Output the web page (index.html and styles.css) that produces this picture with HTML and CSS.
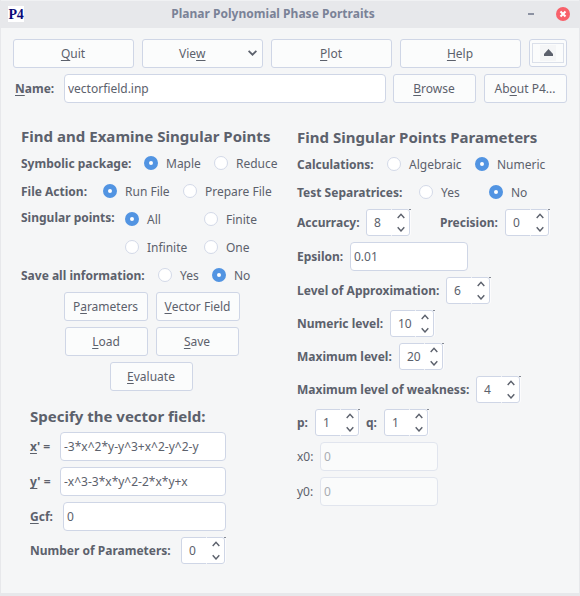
FILE: index.html
```html
<!DOCTYPE html>
<html lang="en">
<head>
<meta charset="utf-8">
<title>Planar Polynomial Phase Portraits</title>
<link rel="stylesheet" href="styles.css">
</head>
<body>
<svg class="defs" width="0" height="0" aria-hidden="true">
  <symbol id="arrows" viewBox="0 0 8 19"><path d="M.7 5 4 1.2 7.3 5M.7 14.2 4 18l3.3-3.8" fill="none" stroke="#5c616c" stroke-width="1.4"/></symbol>
</svg>
<div class="window">
  <header class="titlebar">
    <span class="logo">P4</span>
    <h1>Planar Polynomial Phase Portraits</h1>
    <span class="minimize"></span>
    <span class="close"><svg width="14" height="14" viewBox="0 0 14 14"><circle cx="7" cy="7" r="7" fill="#f8616b"/><path d="m4.5 4.5 5 5m0-5-5 5" stroke="#fff" stroke-width="2.1"/></svg></span>
  </header>

  <nav class="toolbar">
    <button><u>Q</u>uit</button>
    <button class="menu">Vie<u>w</u><svg width="9" height="6" viewBox="0 0 9 6"><path d="M.6.8 4.5 4.7 8.4.8" fill="none" stroke="#5c616c" stroke-width="1.8"/></svg></button>
    <button><u>P</u>lot</button>
    <button><u>H</u>elp</button>
    <button class="collapse"><span><i><svg width="9" height="7" viewBox="0 0 9 7"><path d="M4.5 0 9 5v2H0V5z" fill="#5c616c"/></svg></i></span></button>
  </nav>
  <div class="file">
    <b class="name"><u>N</u>ame:</b>
    <input value="vectorfield.inp">
    <button><u>B</u>rowse</button>
    <button>Ab<u>o</u>ut P4...</button>
  </div>

  <main>
    <section class="left">
      <h2 class="find">Find and Examine Singular Points</h2>
      <div class="options symbolic"><b>Symbolic package:</b><label><i class="radio on"></i>Maple</label><label><i class="radio"></i>Reduce</label></div>
      <div class="options action"><b>File Action:</b><label><i class="radio on"></i>Run File</label><label><i class="radio"></i>Prepare File</label></div>
      <div class="options points"><b>Singular points:</b><label><i class="radio on"></i>All</label><label><i class="radio"></i>Finite</label><label class="infinite"><i class="radio"></i>Infinite</label><label><i class="radio"></i>One</label></div>
      <div class="options save"><b>Save all information:</b><label><i class="radio"></i>Yes</label><label><i class="radio on"></i>No</label></div>
      <div class="actions">
        <div><button class="wide">P<u>a</u>rameters</button><button class="wide"><u>V</u>ector Field</button></div>
        <div><button><u>L</u>oad</button><button><u>S</u>ave</button></div>
        <div><button class="evaluate"><u>E</u>valuate</button></div>
      </div>
      <div class="equations">
        <h2 class="specify">Specify the vector field:</h2>
        <div class="row eq"><b><u>x</u>' =</b><input value="-3*x^2*y-y^3+x^2-y^2-y"></div>
        <div class="row eq"><b><u>y</u>' =</b><input value="-x^3-3*x*y^2-2*x*y+x"></div>
        <div class="row gcf"><b><u>G</u>cf:</b><input value="0"></div>
        <div class="row count"><b>Number of Parameters:</b><span class="spin"><span>0</span><svg><use href="#arrows"/></svg></span></div>
      </div>
    </section>

    <section class="right">
      <h2 class="params">Find Singular Points Parameters</h2>
      <div class="options calc"><b>Calculations:</b><label><i class="radio"></i>Algebraic</label><label><i class="radio on"></i>Numeric</label></div>
      <div class="options test"><b>Test Separatrices:</b><label><i class="radio"></i>Yes</label><label><i class="radio on"></i>No</label></div>
      <div class="fields">
        <div class="row accuracy"><b>Accurracy:</b><span class="spin"><span>8</span><svg><use href="#arrows"/></svg></span><b>Precision:</b><span class="spin"><span>0</span><svg><use href="#arrows"/></svg></span></div>
        <div class="row epsilon"><b>Epsilon:</b><input value="0.01"></div>
        <div class="row approx"><b>Level of Approximation:</b><span class="spin"><span>6</span><svg><use href="#arrows"/></svg></span></div>
        <div class="row numeric"><b>Numeric level:</b><span class="spin"><span>10</span><svg><use href="#arrows"/></svg></span></div>
        <div class="row maximum"><b>Maximum level:</b><span class="spin"><span>20</span><svg><use href="#arrows"/></svg></span></div>
        <div class="row weakness"><b>Maximum level of weakness:</b><span class="spin"><span>4</span><svg><use href="#arrows"/></svg></span></div>
        <div class="row pq"><b>p:</b><span class="spin"><span>1</span><svg><use href="#arrows"/></svg></span><b>q:</b><span class="spin"><span>1</span><svg><use href="#arrows"/></svg></span></div>
        <div class="row origin"><span>x0:</span><input value="0" disabled></div>
        <div class="row origin"><span>y0:</span><input value="0" disabled></div>
      </div>
    </section>
  </main>
</div>
</body>
</html>
```

FILE: styles.css
```css
* { box-sizing: border-box; }
body {
  margin: 0;
  background: #e7e8eb;
  color: #5c616c;
  font: 12px/16px "Noto Sans", sans-serif;
}
.defs { display: block; }
.window {
  width: 580px;
  height: 596px;
  border: solid #e7e8eb;
  border-width: 0 1px 3px;
  background: #f5f6f7;
  overflow: hidden;
}
h1, h2 { margin: 0; white-space: nowrap; }
b { white-space: nowrap; }
u { text-decoration: underline; text-underline-offset: 2px; text-decoration-thickness: 1px; text-decoration-skip-ink: none; }

.titlebar {
  display: flex;
  align-items: center;
  height: 28px;
  padding: 0 10px 0 8px;
  margin: 0 -1px;
  border-top: 1px solid #f0f1f3;
  background: #e7e8eb;
}
.logo {
  width: 16px;
  height: 16px;
  margin-top: -1px;
  background: #fff;
  color: #0a0a78;
  font: bold 14px/17px "Liberation Serif", serif;
  letter-spacing: -.3px;
  text-align: center;
}
h1 { flex: 1; padding-right: 6px; color: #7a8297; font-size: 12px; line-height: 16px; letter-spacing: .02px; text-align: center; }
.titlebar h1 { margin-top: -1px; }
.minimize { width: 6px; height: 2px; margin: -1px 22px 0 0; background: #8c92a2; }
.close { display: flex; margin-top: -1px; }

button {
  display: flex;
  align-items: center;
  justify-content: center;
  width: 83px;
  height: 29px;
  padding: 1px 1px 0 0;
  border: 1px solid #cfd6e6;
  border-radius: 3px;
  background: #fbfcfc;
  color: inherit;
  font: inherit;
  white-space: nowrap;
}
input {
  width: 118px;
  height: 29px;
  padding: 0 3px 1px;
  border: 1px solid #cfd6e6;
  border-radius: 4px;
  background: #fff;
  color: inherit;
  font: inherit;
}
input:disabled { border-color: #e1e5ee; background: #fafbfb; color: #a9acb2; }

.toolbar { display: flex; gap: 8px; padding: 11px 12px 0; }
.toolbar button { width: 121px; }
.toolbar .menu { justify-content: flex-start; padding-left: 36px; }
.menu svg { margin: -2px 0 0 42px; }
.toolbar .collapse { width: 38px; height: 28px; padding: 0; }
.collapse span { display: flex; justify-content: center; align-items: center; width: 32px; height: 20px; border: 1px solid #dbe0ea; }
.collapse i { display: flex; justify-content: center; align-items: center; width: 16px; height: 16px; background: #f5f6f7; }
.collapse svg { margin-top: -2px; }
.file { display: flex; align-items: center; padding: 6px 0 0 14px; }
.file .name { width: 49px; }
.file input { width: 322px; margin-right: 7px; }
.file button + button { margin-left: 8px; }

main { display: grid; grid-template-columns: 276px 1fr; padding-left: 20px; }
.left { padding-top: 23px; }
.right { padding-top: 24px; }
h2 { height: 20px; margin-bottom: 3px; font-size: 15px; line-height: 20px; letter-spacing: .03px; }
.specify { letter-spacing: 0; }

.options { display: grid; align-items: center; grid-auto-rows: 28px; }
.options b, label { padding-top: 2px; }
label { display: flex; align-items: center; gap: 8px; white-space: nowrap; }
.radio { flex: none; width: 14px; height: 14px; margin-top: -2px; border: 1px solid #d3d9e8; border-radius: 50%; background: #fff; }
.radio.on { border: 5px solid #5294e2; }
.symbolic { grid-template-columns: 123px 70px 1fr; }
.action { grid-template-columns: 82px 80px 1fr; }
.points { grid-template-columns: 104px 79px 1fr; }
.points b { padding: 0 0 2px; }
.infinite { grid-column: 2; }
.save { grid-template-columns: 137px 54px 1fr; }
.calc { grid-template-columns: 90px 88px 1fr; }
.test { grid-template-columns: 122px 70px 1fr; }

.actions { display: flex; flex-direction: column; gap: 6px; width: 262px; padding-top: 3px; }
.actions div { display: flex; justify-content: center; gap: 8px; }
.actions .wide { width: 84px; }
.actions .evaluate { margin-right: 1px; }
.equations { display: flex; flex-direction: column; gap: 6px; padding: 15px 0 0 9px; }
.equations h2 { margin-bottom: 0; }
.row { display: flex; align-items: center; }
.eq b { width: 30px; }
.eq input { width: 166px; }
.gcf b { width: 33px; }
.gcf input { width: 163px; }
.count b { width: 151px; }

.fields { display: flex; flex-direction: column; gap: 6px; padding-top: 3px; }
.spin {
  position: relative;
  display: flex;
  justify-content: space-between;
  align-items: center;
  width: 44px;
  height: 27px;
  padding: 0 4px 0 7px;
  border: 1px solid #cfd6e6;
  border-radius: 3px;
  background: #fff;
  box-shadow: 1px 0 #fcfcfd;
}
/* Seam between the value and its stepper, and the frame's corner mark. */
.spin::before {
  content: "";
  position: absolute;
  inset: -1px auto -1px 24px;
  width: 1px;
  border: solid #f0f2f6;
  border-width: 1px 0;
}
.spin::after {
  content: "";
  position: absolute;
  top: -1px;
  right: -2px;
  width: 2px;
  height: 1px;
  background: #858a94;
}
.spin svg { width: 8px; height: 19px; }
.accuracy b { width: 69px; }
.accuracy .spin + b { width: 65px; margin-left: 30px; }
.epsilon b { width: 53px; }
.approx b { width: 149px; }
.numeric b { width: 93px; }
.maximum b { width: 102px; }
.weakness b { width: 179px; }
.pq b { width: 18px; }
.pq .spin + b { margin-left: 7px; }
.origin > span { width: 23px; }
```
